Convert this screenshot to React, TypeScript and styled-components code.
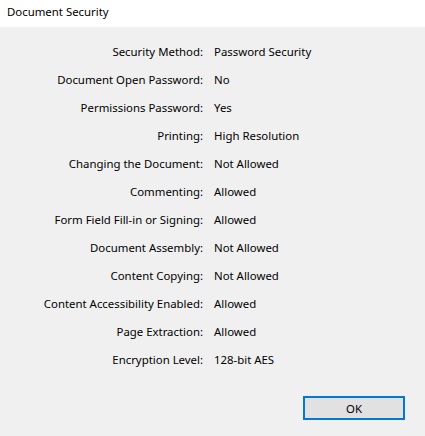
import * as React from 'react';
import styled, { createGlobalStyle } from 'styled-components';

const rows: [string, string][] = [
  ['Security Method:', 'Password Security'],
  ['Document Open Password:', 'No'],
  ['Permissions Password:', 'Yes'],
  ['Printing:', 'High Resolution'],
  ['Changing the Document:', 'Not Allowed'],
  ['Commenting:', 'Allowed'],
  ['Form Field Fill-in or Signing:', 'Allowed'],
  ['Document Assembly:', 'Not Allowed'],
  ['Content Copying:', 'Not Allowed'],
  ['Content Accessibility Enabled:', 'Allowed'],
  ['Page Extraction:', 'Allowed'],
  ['Encryption Level:', '128-bit AES'],
];

const App = () => {
  return (
    <>
      <GlobalStyle />
      <Dialog>
        <TitleBar>Document Security</TitleBar>
        <Body>
          <InfoGrid>
            {rows.map(([label, value]) => (
              <React.Fragment key={label}>
                <Label>{label}</Label>
                <Value>{value}</Value>
              </React.Fragment>
            ))}
          </InfoGrid>
          <Footer>
            <OkButton>OK</OkButton>
          </Footer>
        </Body>
      </Dialog>
    </>
  );
};

export default App;

const GlobalStyle = createGlobalStyle`
  html, body {
    margin: 0;
    padding: 0;
    background: #f0f0f0;
  }
  body {
    font-family: 'Noto Sans', 'Open Sans', sans-serif;
    font-size: 11.4px;
    color: #000;
  }
`;

const Dialog = styled.div`
  width: 425px;
  height: 436px;
  display: flex;
  flex-direction: column;
  background: #f0f0f0;
`;

const TitleBar = styled.div`
  height: 27px;
  background: #fff;
  padding-left: 7px;
  display: flex;
  align-items: center;
  padding-bottom: 4px;
  box-sizing: border-box;
`;

const Body = styled.div`
  flex: 1;
  display: flex;
  flex-direction: column;
  padding: 10px 20px 0 0;
`;

const InfoGrid = styled.div`
  display: grid;
  grid-template-columns: 203px 1fr;
  grid-auto-rows: 28px;
  column-gap: 11px;
  align-items: center;
`;

const Label = styled.div`
  justify-self: end;
  white-space: nowrap;
`;

const Value = styled.div`
  white-space: nowrap;
`;

const Footer = styled.div`
  display: flex;
  justify-content: flex-end;
  margin-top: 23px;
`;

const OkButton = styled.button`
  width: 102px;
  height: 24px;
  box-sizing: border-box;
  border: 2px solid #0078d7;
  background: #e1e1e1;
  font-family: inherit;
  font-size: 11.4px;
  color: #000;
  padding: 0;
`;
